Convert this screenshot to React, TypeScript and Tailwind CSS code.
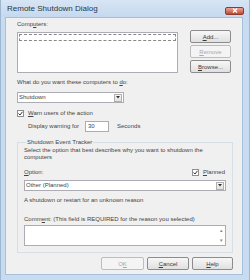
import React from 'react';

const font = { fontFamily: '"Liberation Sans", Arial, sans-serif' };

type BtnProps = { label: React.ReactNode; disabled?: boolean; className?: string };

function WinButton({ label, disabled, className = '' }: BtnProps) {
  return (
    <div
      className={`flex h-[13px] items-center justify-center rounded-[2px] border text-[6px] leading-none ${
        disabled
          ? 'border-[#bdbdbd] bg-[#f4f4f4] text-[#a8a8a8]'
          : 'border-[#8c8c8c] bg-gradient-to-b from-[#f7f7f7] to-[#e0e0e0] text-[#3a3a3a]'
      } ${className}`}
    >
      {label}
    </div>
  );
}

function Check() {
  return (
    <div className="flex h-[7px] w-[7px] items-center justify-center border border-[#8e8f8f] bg-white">
      <svg width="5" height="5" viewBox="0 0 5 5">
        <path d="M0.5 2.5 L2 4 L4.5 0.8" stroke="#333" strokeWidth="1" fill="none" />
      </svg>
    </div>
  );
}

function DropArrow() {
  return (
    <div className="flex h-[8px] w-[8px] items-center justify-center border border-[#b0b0b0] bg-gradient-to-b from-[#f6f6f6] to-[#e2e2e2]">
      <svg width="4" height="3" viewBox="0 0 4 3">
        <path d="M0 0 H4 L2 2.5 Z" fill="#333" />
      </svg>
    </div>
  );
}

export default function App() {
  return (
    <div
      className="flex h-[280px] w-[250px] flex-col border-x border-[#9fb6cf] bg-[#c7dbf1] text-[#444]"
      style={font}
    >
      <div className="flex h-[17px] items-center justify-between bg-gradient-to-b from-[#d7e5f4] to-[#c5d9ef] pl-[6px] pr-[5px]">
        <span className="text-[8px] text-[#2a3646]">Remote Shutdown Dialog</span>
        <div className="mt-[4px] flex h-[8px] w-[19px] items-center justify-center rounded-[2px] border border-[#8d3b2f] bg-gradient-to-b from-[#e8a597] to-[#c24430]">
          <svg width="6" height="5" viewBox="0 0 6 5">
            <path d="M1 0.5 L5 4.5 M5 0.5 L1 4.5" stroke="#fff" strokeWidth="1.3" />
          </svg>
        </div>
      </div>

      <div className="mb-[5px] ml-[4px] mr-[6px] flex flex-1 flex-col border border-[#a8bfd8] bg-[#f0f0f0] pl-[11px] text-[6px]">
        <div className="mt-[2px] h-[8px] leading-[8px]">
          Comp<u>u</u>ters:
        </div>

        <div className="mt-[2px] flex">
          <div className="mt-[2px] h-[41px] w-[161px] border border-[#abadb3] bg-white p-[1px]">
            <div className="h-[7px] border border-dashed border-[#888]" />
          </div>
          <div className="ml-[12px] flex w-[41px] flex-col gap-[2px]">
            <WinButton label={<span><u>A</u>dd...</span>} />
            <WinButton label={<span><u>R</u>emove</span>} disabled />
            <WinButton label={<span><u>B</u>rowse...</span>} />
          </div>
        </div>

        <div className="mt-[5px] h-[8px] leading-[8px]">
          What do you want these computers to <u>d</u>o:
        </div>

        <div className="mt-[6px] flex h-[11px] w-[107px] items-center justify-between border border-[#abadb3] bg-white pl-[1px] pr-[1px]">
          <span>Shutdown</span>
          <DropArrow />
        </div>

        <div className="mt-[6px] flex h-[8px] items-center gap-[4px]">
          <Check />
          <span>
            <u>W</u>arn users of the action
          </span>
        </div>

        <div className="mt-[4px] flex h-[11px] items-center pl-[11px]">
          <span>Display warning for</span>
          <div className="ml-[6px] flex h-[11px] w-[24px] items-center border border-[#abadb3] bg-white pl-[2px]">
            30
          </div>
          <span className="ml-[8px]">Seconds</span>
        </div>

        <fieldset className="mt-[6px] w-[216px] border border-[#d5dfe5] px-[6px] pb-[6px]">
          <legend className="ml-[2px] px-[1px] leading-[8px]">Shutdown Event Tracker</legend>
          <div className="mt-[1px] leading-[7px]">
            Select the option that best describes why you want to shutdown the computers
          </div>
          <div className="mt-[7px] flex h-[8px] items-center justify-between pr-[1px]">
            <span>
              <u>O</u>ption:
            </span>
            <div className="flex items-center gap-[4px]">
              <Check />
              <span>
                <u>P</u>lanned
              </span>
            </div>
          </div>
          <div className="mt-[4px] flex h-[11px] items-center justify-between border border-[#abadb3] bg-white px-[1px]">
            <span>Other (Planned)</span>
            <DropArrow />
          </div>
          <div className="mt-[5px] h-[8px] leading-[8px]">A shutdown or restart for an unknown reason</div>
          <div className="mt-[11px] h-[8px] leading-[8px]">
            Comm<u>e</u>nt: (This field is REQUIRED for the reason you selected)
          </div>
          <div className="mt-[2px] flex h-[21px] justify-end border border-[#abadb3] bg-white">
            <div className="flex w-[7px] flex-col items-center justify-between py-[2px] text-[5px] leading-none text-[#888]">
              <span>▴</span>
              <span>▾</span>
            </div>
          </div>
        </fieldset>

        <div className="mt-[4px] flex w-[216px] justify-end gap-[3px]">
          <WinButton label={<span>O<u>K</u></span>} disabled className="w-[43px]" />
          <WinButton label={<span><u>C</u>ancel</span>} className="w-[42px]" />
          <WinButton label={<span><u>H</u>elp</span>} className="w-[41px]" />
        </div>
      </div>
    </div>
  );
}
